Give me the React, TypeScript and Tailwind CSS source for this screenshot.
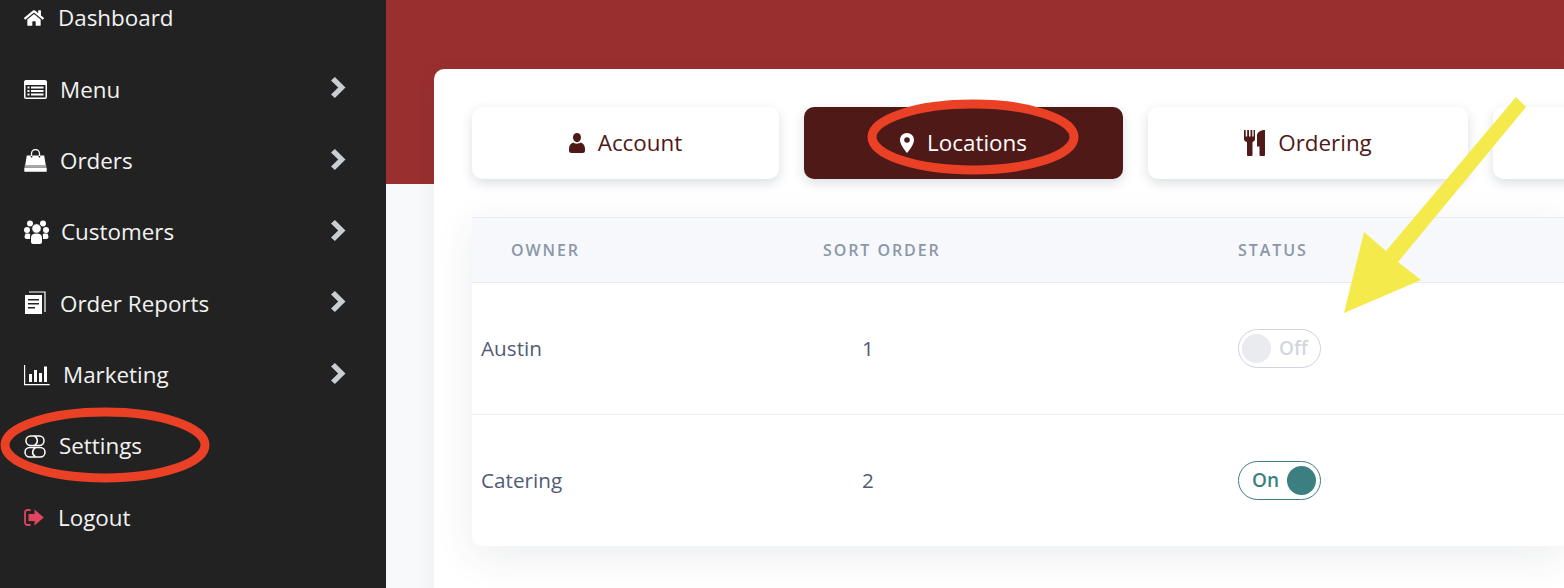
import type { ReactNode } from "react";
import { FaHome } from "react-icons/fa";

const OPEN_SANS = { fontFamily: '"Open Sans", sans-serif' };

function Chevron() {
  return (
    <svg viewBox="0 0 15 21" className="mb-[3px] ml-auto h-[21px] w-[15px]" fill="#c9ced4">
      <path d="M0 3.400 3.900 0 14.500 10.500 3.900 21 0 17.600 7.200 10.500z" />
    </svg>
  );
}

function MenuIcon() {
  return (
    <svg viewBox="0 0 23 19" className="h-[19px] w-[23px]">
      <rect x="0" y="0" width="23" height="19" rx="2" fill="white" />
      <rect x="1.500" y="5" width="20" height="12.500" fill="#222222" />
      <path d="M3.500 7.500h2M3.500 11h2M3.500 14.500h2M7 7.500h12.500M7 11h12.500M7 14.500h12.500" stroke="white" strokeWidth="1.800" />
    </svg>
  );
}

function BagIcon() {
  return (
    <svg viewBox="0 0 23 23" className="h-[23px] w-[23px]" fill="white">
      <path d="M7.500 7V4.500a4 4 0 0 1 8 0V7" fill="none" stroke="white" strokeWidth="1.300" />
      <path d="M2.800 6.500h4v2h1.500v-2h6.400v2h1.500v-2h4l1.500 9.500H1.200z" />
      <rect x="0.300" y="18.600" width="22.400" height="4.200" rx="0.400" />
      <rect x="0.700" y="16" width="21.600" height="2.600" fill="#a8a8a8" />
    </svg>
  );
}

function UsersIcon() {
  return (
    <svg viewBox="0 0 25 24" className="h-[24px] w-[25px]" fill="white">
      <circle cx="6" cy="3.500" r="3" />
      <circle cx="19" cy="3.500" r="3" />
      <circle cx="3" cy="10" r="3" />
      <circle cx="22" cy="10" r="3" />
      <circle cx="12.500" cy="8.500" r="4.800" stroke="#222222" strokeWidth="1" />
      <path d="M7 17.500c0-2.800 2-4 5.500-4s5.500 1.200 5.500 4v4.500a2 2 0 0 1-2 2H9a2 2 0 0 1-2-2z" />
      <path d="M1.500 13.500h3.800c.7.500 1.500 1 .7 2.500v3H3a2.500 2.500 0 0 1-2.500-2.500zM23.500 13.500h-3.800c-.7.500-1.500 1-.7 2.500v3h3a2.500 2.500 0 0 0 2.500-2.500z" />
    </svg>
  );
}

function ReportIcon() {
  return (
    <svg viewBox="0 0 22 24" className="h-[24px] w-[22px]" fill="none">
      <path d="M5 1h16v20" stroke="white" strokeWidth="1.200" />
      <path
        fill="white"
        fillRule="evenodd"
        d="M1 4h17v19H1zM4 8v1.600h11V8zm0 4v1.600h11V12zm0 4v1.600h7V16z"
      />
    </svg>
  );
}

function ChartIcon() {
  return (
    <svg viewBox="0 0 26 22" className="h-[22px] w-[26px]" fill="white">
      <path d="M.6 1v19.600h25" fill="none" stroke="white" strokeWidth="1.200" />
      <rect x="5" y="10" width="3" height="8" />
      <rect x="10" y="6" width="3" height="12" />
      <rect x="15" y="9" width="3" height="9" />
      <rect x="20" y="2.500" width="3" height="15.500" />
    </svg>
  );
}

function ToggleIcon() {
  return (
    <svg viewBox="0 0 22 23" className="h-[23px] w-[22px]" fill="none" stroke="white" strokeWidth="1.500">
      <rect x="2" y="1" width="18" height="9.500" rx="4.750" />
      <path d="M10.500 1.400a4.750 4.750 0 0 1 0 8.700" />
      <rect x="1" y="12.500" width="20" height="9.500" rx="4.750" />
      <path d="M11.500 12.900a4.750 4.750 0 0 0 0 8.700" />
    </svg>
  );
}

function LogoutIcon() {
  return (
    <svg viewBox="0 0 20 17" className="h-[17px] w-[20px]">
      <path d="M6.500 1H3.500a2.500 2.500 0 0 0-2.500 2.500v10a2.500 2.500 0 0 0 2.500 2.500h3" fill="none" stroke="#e2445f" strokeWidth="1.800" />
      <path d="M4.500 5h6V.6L19.800 8.500 10.500 16.400V12h-6z" fill="#e2445f" />
    </svg>
  );
}

function UserIcon() {
  return (
    <svg viewBox="0 0 16 20" className="h-[20px] w-[16px]" fill="#4e1916">
      <ellipse cx="8" cy="4.600" rx="4" ry="4.600" />
      <path d="M4.200 9.500c1 .8 2.400 1.200 3.800 1.200s2.800-.4 3.800-1.200C14.400 10.300 16 12.800 16 16v1.500a2.500 2.500 0 0 1-2.500 2.500h-11A2.500 2.500 0 0 1 0 17.500V16c0-3.200 1.600-5.700 4.200-6.500z" />
    </svg>
  );
}

function PinIcon() {
  return (
    <svg viewBox="0 0 14 20" className="h-[20px] w-[14px]" fill="white">
      <path
        fillRule="evenodd"
        d="M7 0C3 0 0 3 0 7c0 4.500 5 10.500 7 13 2-2.500 7-8.500 7-13 0-4-3-7-7-7zm0 4.200a2.800 2.800 0 1 1 0 5.600 2.800 2.800 0 0 1 0-5.600z"
      />
    </svg>
  );
}

function CutleryIcon() {
  return (
    <svg viewBox="0 0 21 26" className="h-[26px] w-[21px]" fill="#4e1916">
      <path d="M0 0h1.700v6.500h1.500V0h1.800v6.500h1.500V0h1.800v6.500h1.300V0h1.400v9c0 1.500-1 2.500-2.500 3V25a1 1 0 0 1-1 1H4a1 1 0 0 1-1-1V12C1 11.500 0 10.500 0 9z" />
      <path d="M21 0v25a1 1 0 0 1-1 1h-3.500a1 1 0 0 1-1-1v-8.500H13V5.500C13 2.500 16 0 21 0z" />
    </svg>
  );
}

function NavItem({
  icon,
  label,
  gap,
  chevron = true,
}: {
  icon: ReactNode;
  label: string;
  gap: string;
  chevron?: boolean;
}) {
  return (
    <div className="flex h-[71.35px] items-center pl-6 pr-[40px] text-[22.400px] text-[#f2f2f2]">
      <span className={`flex items-center ${gap}`}>
        {icon}
        <span>{label}</span>
      </span>
      {chevron && <Chevron />}
    </div>
  );
}

function Tab({
  icon,
  label,
  width,
  active = false,
}: {
  icon?: ReactNode;
  label?: string;
  width: string;
  active?: boolean;
}) {
  return (
    <div
      className={`flex h-[72px] shrink-0 items-center justify-center gap-[13px] rounded-[10px] text-[22.400px] shadow-[0_4px_12px_rgba(40,50,80,0.16)] ${width} ${
        active ? "bg-[#4e1916] text-white" : "bg-white text-[#4e1916]"
      }`}
    >
      {icon}
      {label && <span>{label}</span>}
    </div>
  );
}

function Status({ on }: { on: boolean }) {
  if (on) {
    return (
      <div className="flex h-[39px] w-[83px] items-center justify-between rounded-full border border-[#3b7f80] pl-[13px] pr-[4px] text-[19px] font-semibold text-[#3b7f80]">
        <span>On</span>
        <span className="h-[29px] w-[29px] rounded-full bg-[#3b7f80]" />
      </div>
    );
  }
  return (
    <div className="flex h-[39px] w-[83px] items-center gap-[8px] rounded-full border border-[#d0d3da] pl-[3px] text-[19px] font-semibold text-[#d2d6dc]">
      <span className="h-[29px] w-[29px] rounded-full bg-[#e9ebef]" />
      <span>Off</span>
    </div>
  );
}

function Row({ owner, order, on, last = false }: { owner: string; order: number; on: boolean; last?: boolean }) {
  return (
    <div
      className={`grid h-[132px] grid-cols-[351px_415px_1fr] items-center border-b text-[20.700px] text-[#525b75] ${
        last ? "border-transparent" : "border-[#e9ebef]"
      }`}
    >
      <div className="pl-[9px]">{owner}</div>
      <div className="pl-[39px]">{order}</div>
      <Status on={on} />
    </div>
  );
}

export default function App() {
  return (
    <div style={OPEN_SANS} className="flex h-[588px] w-[1564px] overflow-hidden bg-[#f8f9fb]">
      <nav className="-mt-[17.700px] h-[606px] w-[386px] shrink-0 bg-[#222222]">
        <NavItem icon={<FaHome className="h-[20px] w-[20px] text-white" />} label="Dashboard" gap="gap-[14px]" chevron={false} />
        <NavItem icon={<MenuIcon />} label="Menu" gap="gap-[13px]" />
        <NavItem icon={<BagIcon />} label="Orders" gap="gap-[13px]" />
        <NavItem icon={<UsersIcon />} label="Customers" gap="gap-[12px]" />
        <NavItem icon={<ReportIcon />} label="Order Reports" gap="gap-[14px]" />
        <NavItem icon={<ChartIcon />} label="Marketing" gap="gap-[13px]" />
        <NavItem icon={<ToggleIcon />} label="Settings" gap="gap-[13px]" chevron={false} />
        <NavItem icon={<LogoutIcon />} label="Logout" gap="gap-[14px]" chevron={false} />
      </nav>

      <main className="relative min-w-0 flex-1">
        <div className="absolute inset-x-0 top-0 h-[184px] bg-[#992f2f]" />
        <div className="relative mt-[69px] ml-[48px] h-[560px] rounded-l-[10px] bg-white pt-[38px] pl-[38px] shadow-[0_6px_24px_rgba(40,50,80,0.06)]">
          <div className="flex gap-[25px]">
            <Tab width="w-[307px]" icon={<UserIcon />} label="Account" />
            <Tab width="w-[319px]" active icon={<PinIcon />} label="Locations" />
            <Tab width="w-[320px]" icon={<CutleryIcon />} label="Ordering" />
            <Tab width="w-[320px]" />
          </div>

          <div className="mt-[38px] h-[329px] rounded-bl-[10px] bg-white shadow-[0_10px_40px_rgba(40,50,80,0.09)]">
            <div className="grid h-[66px] grid-cols-[351px_415px_1fr] items-center border-y border-[#e9ebef] bg-[#f7f8fc] text-[16px] font-semibold tracking-[0.12em] text-[#8a97a8]">
              <div className="pl-[39px]">OWNER</div>
              <div>SORT ORDER</div>
              <div>STATUS</div>
            </div>
            <Row owner="Austin" order={1} on={false} />
            <Row owner="Catering" order={2} on last />
          </div>
        </div>
      </main>

      {/* annotations drawn on top of the screenshot */}
      <svg className="pointer-events-none absolute top-0 left-0" width="1564" height="588" viewBox="0 0 1564 588" fill="none">
        <ellipse cx="105" cy="445" rx="100" ry="33" stroke="#ea4025" strokeWidth="9" />
        <ellipse cx="973" cy="137" rx="101" ry="33" stroke="#ea4025" strokeWidth="9" />
        <path d="M1516 97 L1526 107 L1398 262 L1421 280 L1344 313 L1364 232 L1386 251 Z" fill="#f4ea4c" />
      </svg>
    </div>
  );
}
